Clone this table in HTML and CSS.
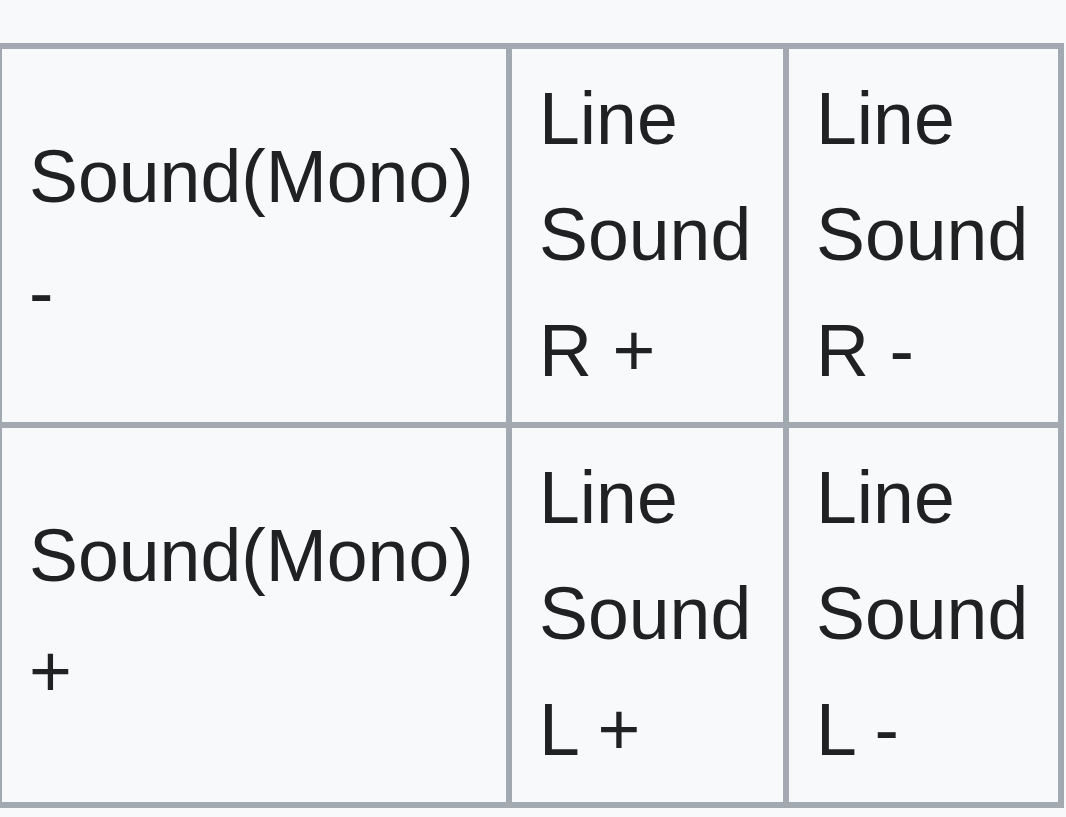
FILE: index.html
```html
<!DOCTYPE html>
<html>
<head>
<meta charset="utf-8">
<link rel="stylesheet" href="styles.css">
</head>
<body>
<table class="wikitable">
  <tbody>
    <tr>
      <td class="c1">Sound(Mono) -</td>
      <td class="c2">Line Sound R +</td>
      <td class="c3">Line Sound R -</td>
    </tr>
    <tr>
      <td class="c1">Sound(Mono) +</td>
      <td class="c2">Line Sound L +</td>
      <td class="c3">Line Sound L -</td>
    </tr>
  </tbody>
</table>
</body>
</html>
```
FILE: styles.css
```css
html, body {
  margin: 0;
  padding: 0;
  background: #f8f9fa;
  overflow: hidden;
}
body {
  padding-top: 43px;
  font-family: "Liberation Sans", Arial, sans-serif;
  color: #202122;
}
.wikitable {
  margin-left: -4px;
  width: 1068px;
  table-layout: fixed;
  border-collapse: separate;
  border-spacing: 6px;
  background: #a2a9b1;
  font-size: 73.4px;
  line-height: 115.8px;
}
.wikitable td {
  box-sizing: border-box;
  background: #f8f9fa;
  padding: 13px 26px 13px 27px;
  vertical-align: middle;
  text-align: left;
}
.c1 { width: 504px; }
.c2 { width: 271px; }
.c3 { width: 269px; }
```
